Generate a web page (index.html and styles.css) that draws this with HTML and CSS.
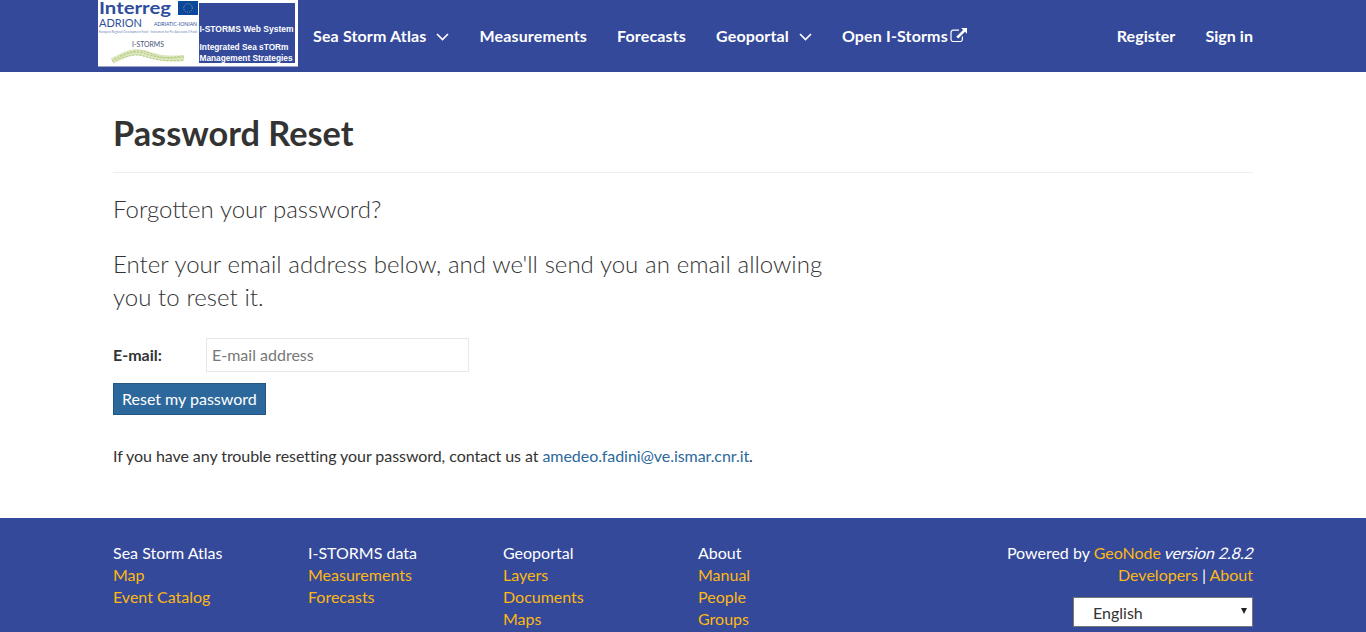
FILE: index.html
```html
<!DOCTYPE html>
<html lang="en">
<head>
<meta charset="utf-8">
<title>Password Reset</title>
<link rel="stylesheet" href="styles.css">
</head>
<body>
<header class="navbar">
  <div class="container navbar-inner">
    <a class="brand" href="#">
      <svg width="200" height="67" viewBox="0 0 200 67" role="img" aria-label="I-STORMS Web System">
        <rect width="200" height="66.5" fill="#fff"/>
        <rect x="101" y="3" width="96" height="60" fill="#34499a"/>
        <rect x="80" y="1" width="20" height="14" fill="#0b479c"/>
        <circle cx="90" cy="8" r="4.3" fill="none" stroke="#a9a566" stroke-width="1" stroke-dasharray="1 1.25"/>
        <g class="logo-blue">
          <text x="1" y="14" font-size="17" font-weight="700" textLength="72" lengthAdjust="spacingAndGlyphs">Interreg</text>
          <text x="1" y="27" font-size="11.5" textLength="43" lengthAdjust="spacingAndGlyphs">ADRION</text>
          <text x="56" y="26" font-size="4.8" textLength="43" lengthAdjust="spacingAndGlyphs">ADRIATIC-IONIAN</text>
          <text x="1" y="33" font-size="3" textLength="98" lengthAdjust="spacingAndGlyphs" opacity=".7">European Regional Development Fund - Instrument for Pre-Accession II Fund</text>
          <text x="34" y="46.500" font-size="8" textLength="32" lengthAdjust="spacingAndGlyphs" class="logo-slate">I-STORMS</text>
        </g>
        <g fill="none">
          <path d="M14 61C27 55 33 50 45 53S64 60 86 58" stroke="#dce6bf" stroke-width="6"/>
          <path d="M14 61C29 57 35 53 45 56S65 62 86 60M16 59C30 54 34 50 45 53S62 60 86 57M22 56C35 50 44 49 54 54S72 58 84 56" stroke="#b3cb7b" stroke-width="1" stroke-dasharray="2 1.5"/>
        </g>
        <g class="logo-white">
          <text x="101.500" y="32" textLength="94" lengthAdjust="spacingAndGlyphs">I-STORMS Web System</text>
          <text x="101.500" y="49.500" textLength="89" lengthAdjust="spacingAndGlyphs">Integrated Sea sTORm</text>
          <text x="101.500" y="60.500" textLength="93" lengthAdjust="spacingAndGlyphs">Management Strategies</text>
        </g>
      </svg>
    </a>
    <nav class="menu">
      <a href="#">Sea Storm Atlas<svg class="chevron" width="13" height="8" viewBox="0 0 13 8"><path d="M1 1l5.5 5.5L12 1"/></svg></a>
      <a href="#">Measurements</a>
      <a href="#">Forecasts</a>
      <a href="#">Geoportal<svg class="chevron" width="13" height="8" viewBox="0 0 13 8"><path d="M1 1l5.5 5.5L12 1"/></svg></a>
      <a href="#">Open I-Storms<svg class="external" width="17" height="15" viewBox="0 0 17 15"><path d="M9 2.1H3.3A2.3 2.3 0 0 0 1 4.4v6.800a2.3 2.3 0 0 0 2.3 2.3h6.800a2.3 2.3 0 0 0 2.3-2.3V8.500" fill="none" stroke="#fff" stroke-width="1.2"/><path d="M11.2 0H17v5.800l-2-2-6.800 6.800-1.900-1.900 6.800-6.800z" fill="#fff"/></svg></a>
    </nav>
    <nav class="menu account">
      <a href="#">Register</a>
      <a href="#">Sign in</a>
    </nav>
  </div>
</header>
<main class="container content">
  <h1 class="title">Password Reset</h1>
  <div class="column">
    <p class="lead">Forgotten your password?</p>
    <p class="lead">Enter your email address below, and we'll send you an email allowing you to reset it.</p>
    <form>
      <div class="field">
        <label class="label" for="email">E-mail:</label>
        <input class="input" id="email" type="email" placeholder="E-mail address">
      </div>
      <button class="button" type="button">Reset my password</button>
    </form>
    <p class="help">If you have any trouble resetting your password, contact us at <a href="#">amedeo.fadini@ve.ismar.cnr.it</a>.</p>
  </div>
</main>
<footer class="footer">
  <div class="container footer-inner">
    <ul class="links"><li>Sea Storm Atlas</li><li><a href="#">Map</a></li><li><a href="#">Event Catalog</a></li></ul>
    <ul class="links"><li>I-STORMS data</li><li><a href="#">Measurements</a></li><li><a href="#">Forecasts</a></li></ul>
    <ul class="links"><li>Geoportal</li><li><a href="#">Layers</a></li><li><a href="#">Documents</a></li><li><a href="#">Maps</a></li></ul>
    <ul class="links"><li>About</li><li><a href="#">Manual</a></li><li><a href="#">People</a></li><li><a href="#">Groups</a></li></ul>
    <div class="powered">
      <div>Powered by <a href="#">GeoNode</a> <i class="version">version 2.8.2</i></div>
      <div><a href="#">Developers</a> | <a href="#">About</a></div>
      <div class="language"><span>English</span><svg width="6" height="6" viewBox="0 0 6 6"><path d="M0 0h6L3 6z" fill="#222"/></svg></div>
    </div>
  </div>
</footer>
</body>
</html>
```
FILE: styles.css
```css
* { box-sizing: border-box; }
html { overflow: hidden; }
body {
  margin: 0;
  height: 632px;
  overflow: hidden;
  font: 16px/22px Lato, sans-serif;
  color: #333;
  background: #fff;
}
a { color: #2c689c; text-decoration: none; }
.container { width: 1170px; margin: 0 auto; padding: 0 15px; }
.navbar { height: 72px; background: #34499a; }
.navbar-inner { display: flex; padding: 0; }
.brand { display: block; height: 67px; }
.brand svg { display: block; overflow: visible; }
.logo-blue { font-family: Lato, sans-serif; fill: #2e4d9c; }
.logo-slate { fill: #465575; }
.logo-white { font: bold 9px "Liberation Sans", Arial, sans-serif; fill: #fff; }
.menu { display: flex; height: 71px; }
.menu a {
  display: flex;
  align-items: center;
  padding: 0 15px;
  color: #fff;
  font-weight: 700;
  letter-spacing: .15px;
}
.account { margin-left: auto; }
.account a { letter-spacing: .05px; }
.chevron { margin: 3px 0 0 10px; fill: none; stroke: #fff; stroke-width: 1.7; }
.external { margin: -1px 0 0 2px; }
.content { height: 446px; padding-top: 41px; }
.title {
  margin: 0 0 19px;
  height: 60px;
  border-bottom: 1px solid #eee;
  font-size: 34.300px;
  line-height: 40px;
  font-weight: 700;
}
.column { width: 750px; padding-right: 30px; }
.lead { margin: 0 0 22px; font-size: 24px; line-height: 33px; font-weight: 300; word-spacing: .25px; }
.field { display: flex; align-items: center; margin-top: 25px; }
.label { width: 93px; font-weight: 700; }
.input {
  width: 263px;
  height: 34px;
  padding: 0 5px 2px;
  border: 1px solid #e8e8e8;
  font: inherit;
  background: #fff;
}
.input::placeholder { color: #777; }
.button {
  display: block;
  height: 32px;
  margin-top: 11px;
  padding: 0 8px;
  border: 1px solid #245682;
  background: #2c689c;
  color: #fff;
  font: inherit;
}
.help { margin: 30px 0 0; letter-spacing: -.065px; }
.footer { height: 114px; background: #34499a; color: #fff; }
.footer a { color: #fdb813; }
.footer-inner { display: flex; padding-top: 24px; }
.links { width: 195px; margin: 0; padding: 0; list-style: none; }
.powered { margin-left: auto; text-align: right; }
.version { display: inline-block; margin-right: -1px; font-style: normal; letter-spacing: -.12px; transform: skewX(-14deg); }
.language {
  display: flex;
  align-items: center;
  justify-content: space-between;
  width: 180px;
  height: 30px;
  margin: 11px 0 0 auto;
  padding: 2px 5px 0 19px;
  border: 1px solid #767676;
  background: #fff;
  color: #333;
}
.language svg { margin-bottom: 4px; }
```
